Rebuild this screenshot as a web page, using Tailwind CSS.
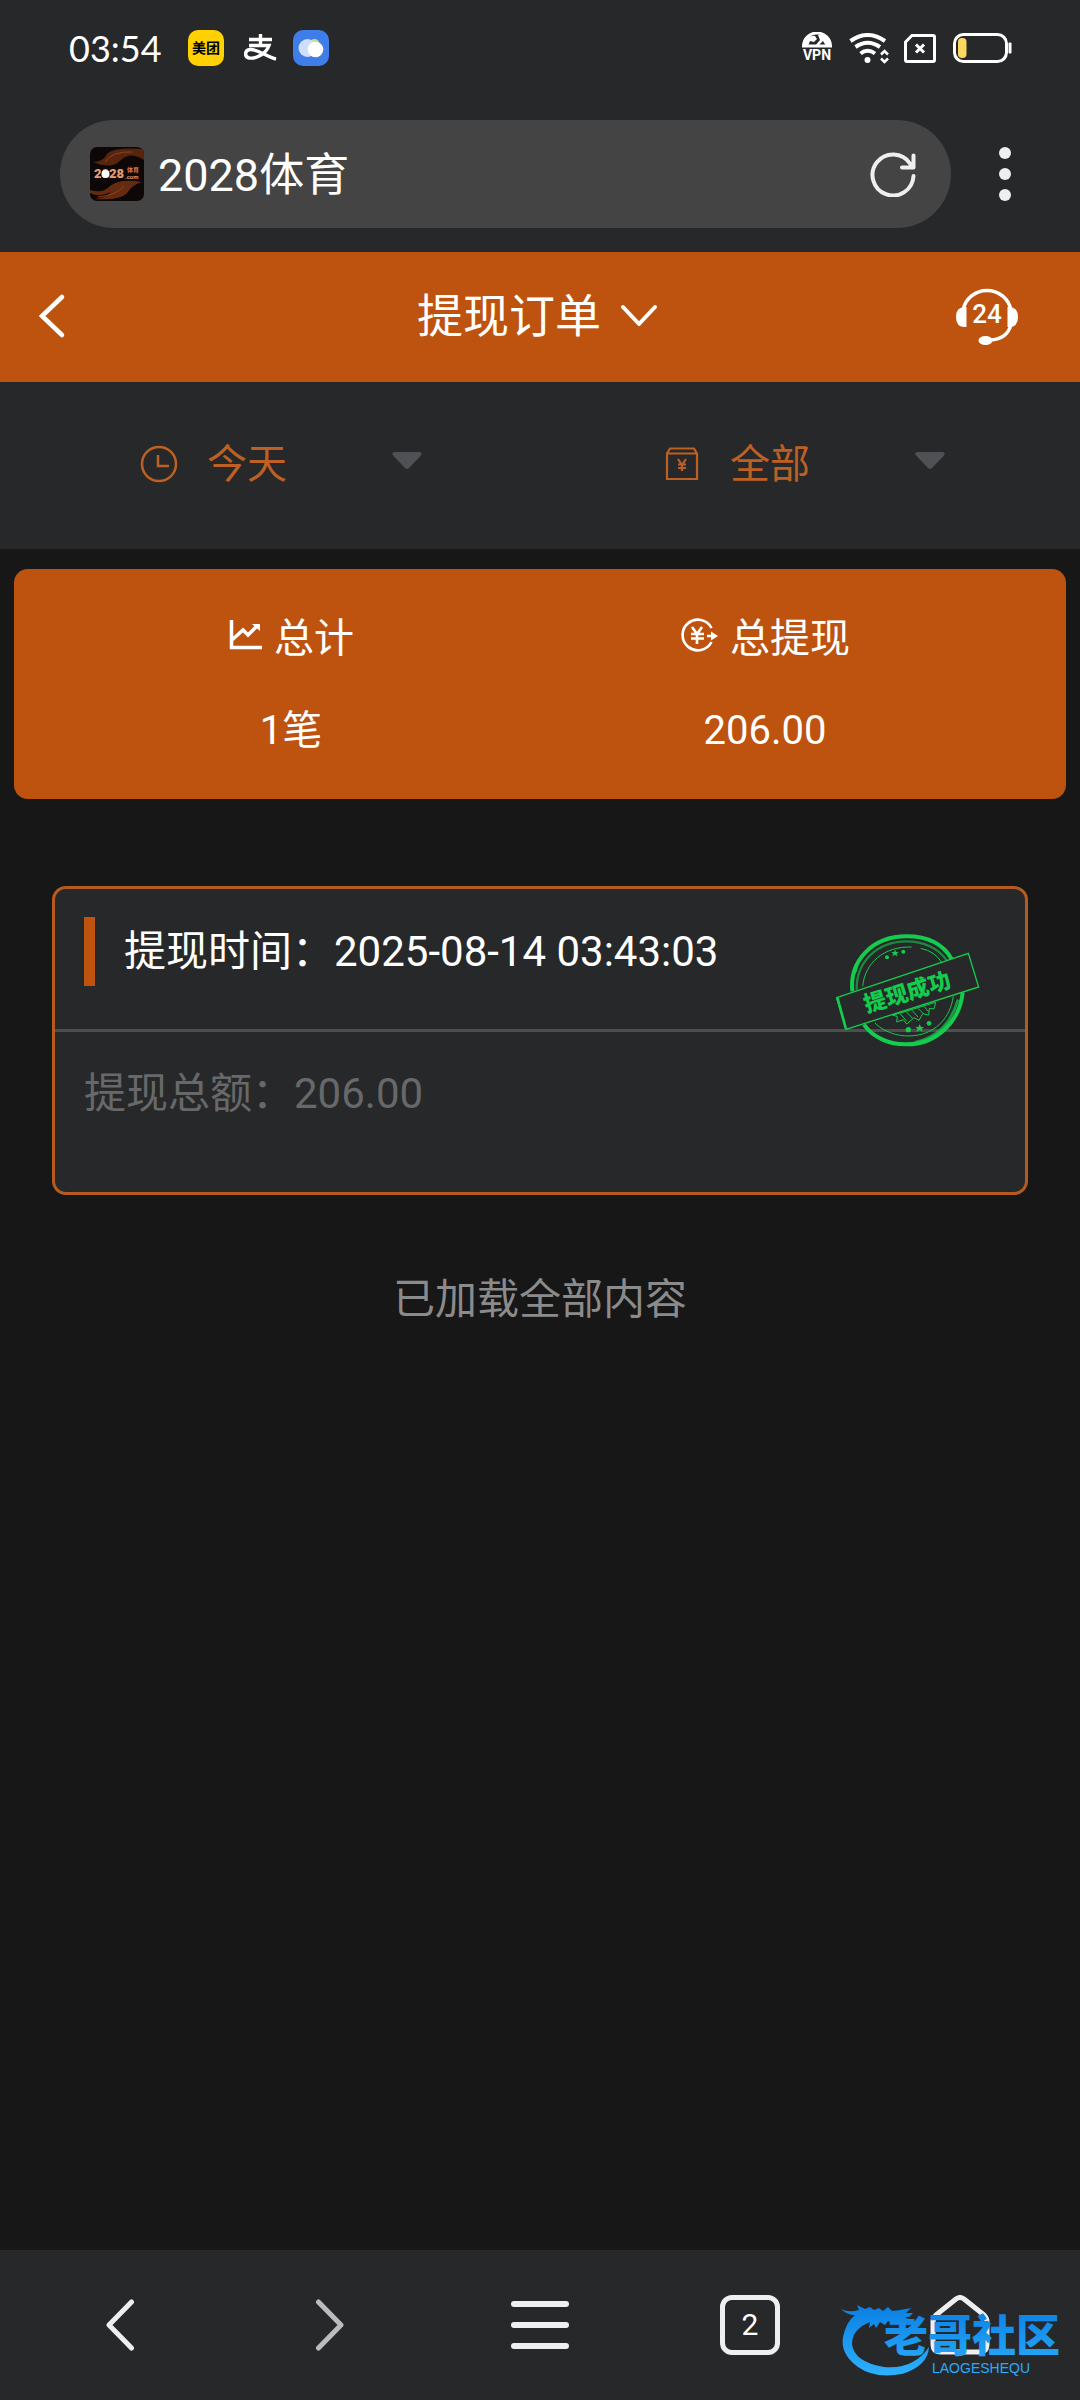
<!DOCTYPE html>
<html lang="zh-CN">
<head>
<meta charset="utf-8">
<meta name="viewport" content="width=device-width, initial-scale=1">
<title>提现订单</title>
<script src="https://cdn.jsdelivr.net/npm/@tailwindcss/browser@4"></script>
</head>
<body class="flex min-h-screen flex-col bg-[#171717] font-['Roboto','Noto_Sans_CJK_SC',sans-serif] text-white">

<!-- Phone status bar -->
<div class="flex h-24 items-center justify-between bg-[#27282a] pr-[68px] pl-[69px]">
  <div class="flex items-center">
    <time class="w-[119px] font-['Lato',sans-serif] text-[36px] leading-[48px]">03:54</time>
    <span class="flex size-9 items-center justify-center rounded-[10px] bg-[#ffd100] text-[14px] leading-none font-bold text-black">美团</span>
    <svg class="ml-5 h-7 w-[34px]" viewBox="0 0 34 28" fill="none" stroke="#fff" stroke-width="3.4" aria-label="支付宝"><path d="M5 5.500H28M16.500 0V11M5 11.500H25C22 20 12 25 5.500 24C0 23 0.500 16 6 15.500C14 15 23 23 32 25"/></svg>
    <svg class="ml-[15px] size-9" viewBox="0 0 36 36" aria-hidden="true"><rect width="36" height="36" rx="10" fill="#3f7de8"/><circle cx="21.500" cy="14" r="5" fill="#c9e46a"/><circle cx="14.500" cy="18" r="9" fill="#cfdffb"/><circle cx="22.500" cy="19.500" r="7.800" fill="#fff"/></svg>
  </div>
  <div class="flex items-center">
    <svg class="h-8 w-[30px]" viewBox="0 0 30 32" aria-label="VPN"><path d="M1.500 14A13.500 13 0 0 1 28.500 14Z" fill="none" stroke="#fff" stroke-width="3"/><path d="M1 13C4 6 9 3 13 4L15 7L12 10L8 9L6 14ZM16 3L22 3L27 9L28 14H24L21 9L16 14H13L18 8Z" fill="#fff"/><text x="15" y="28" text-anchor="middle" font-family="Roboto, sans-serif" font-weight="700" font-size="14" fill="#fff">VPN</text></svg>
    <svg class="ml-[17px] h-[31px] w-10" viewBox="0 0 40 31" fill="none" stroke="#fff" stroke-width="4" aria-label="Wi-Fi"><path d="M1.500 8Q18.500 -4 36 8M6.500 14Q18.500 5.500 31 14M11.500 20.500Q18.500 15 26 20.500"/><circle cx="18.500" cy="27" r="3" fill="#fff" stroke="none"/><path d="M32 21.500L35.500 18L39 21.500M32 25.500L35.500 29L39 25.500" stroke-width="2.500"/></svg>
    <svg class="ml-[15px] h-[29px] w-8" viewBox="0 0 32 29" fill="none" stroke="#fff" stroke-width="3" aria-label="无SIM卡"><path d="M8 1.500H29Q30.500 1.500 30.500 3V26Q30.500 27.500 29 27.500H3Q1.500 27.500 1.500 26V8Z"/><path d="M12 10.500L20 18.500M20 10.500L12 18.500"/></svg>
    <svg class="ml-[17px] h-[30px] w-[59px]" viewBox="0 0 59 30" aria-label="电量低"><rect x="1.500" y="1.500" width="52" height="27" rx="9" fill="none" stroke="#fff" stroke-width="3"/><rect x="5" y="5" width="8.500" height="20" rx="4" fill="#fbd862"/><rect x="55.500" y="9.500" width="3" height="11" rx="1" fill="#fff"/></svg>
  </div>
</div>

<!-- Browser address bar -->
<div class="flex h-[156px] items-start bg-[#27282a] pt-6 pr-[69px] pl-[60px]">
  <div class="flex h-[108px] flex-1 items-center rounded-full bg-[#444] pr-[35px] pl-[30px]">
    <svg class="size-[54px] shrink-0" viewBox="0 0 54 54" aria-hidden="true">
      <defs><clipPath id="fav"><rect width="54" height="54" rx="7"/></clipPath></defs>
      <g clip-path="url(#fav)"><rect width="54" height="54" fill="#0d0807"/><path d="M3 15Q13 15 17 7Q23 0 54 2V13Q40 4 31 13Q22 23 3 15Z" fill="#57250f"/><path d="M0 43Q13 47 20 39Q30 31 52 35Q42 38 38 45Q31 54 4 52Q16 51 21 45Q10 51 0 46Z" fill="#642b10"/><path d="M15 15Q22 4 42 5M8 50Q27 48 34 39" stroke="#8f4218" fill="none"/></g>
      <text x="4" y="31" font-family="Roboto, sans-serif" font-weight="900" font-size="13" fill="#e59a74">2028</text><circle cx="15.500" cy="27" r="4" fill="#fff"/>
      <text x="37" y="25" font-family="'Noto Sans CJK SC', sans-serif" font-weight="700" font-size="6" fill="#e07a45">体育</text><text x="35" y="31.500" font-family="Roboto, sans-serif" font-weight="700" font-size="6" fill="#e59a74">.com</text>
    </svg>
    <input aria-label="网址" value="2028体育" class="mt-[3px] ml-[14px] h-[66px] min-w-0 flex-1 bg-transparent text-[45px] leading-[66px] text-white outline-none">
    <button aria-label="刷新"><svg class="size-[46px]" viewBox="0 0 46 46" fill="none" stroke="#efeff0" stroke-width="4" stroke-linecap="round" stroke-linejoin="round"><path d="M43.500 25A20.500 20.500 0 1 1 40 12.500L43 16.500M43.500 4.500V16.500H32"/></svg></button>
  </div>
  <button aria-label="更多" class="mt-[27px] ml-12"><svg class="h-[54px] w-3" viewBox="0 0 12 54" fill="#efeff3"><circle cx="6" cy="6" r="6"/><circle cx="6" cy="27" r="6"/><circle cx="6" cy="48" r="6"/></svg></button>
</div>

<!-- Page header -->
<header class="grid h-[130px] grid-cols-[1fr_auto_1fr] items-center bg-[#be530f] pr-[62px] pb-[3px] pl-[38px]">
  <a href="#" aria-label="返回" class="w-8"><svg class="h-12 w-8" viewBox="0 0 32 48" fill="none" stroke="#fff" stroke-width="4.500" stroke-linecap="round"><path d="M24 5L4 24L24 43"/></svg></a>
  <button class="ml-[18px] flex items-center gap-5 text-[46px] leading-[60px]">提现订单<svg class="h-6 w-9" viewBox="0 0 36 24" fill="none" stroke="#fff" stroke-width="4" stroke-linecap="round" stroke-linejoin="round"><path d="M2 3L18 20L34 3"/></svg></button>
  <a href="#" aria-label="24小时客服" class="justify-self-end"><svg class="h-[60px] w-[62px]" viewBox="0 0 62 60" fill="none" stroke="#fff" stroke-width="3.500"><path d="M7 24A24.500 24.500 0 0 1 55 24M55 38Q52 53 34 54"/><path d="M10.500 21V41Q0 42 0 31Q0 20 10.500 21ZM51.500 21V41Q62 42 62 31Q62 20 51.500 21Z" fill="#fff" stroke="none"/><ellipse cx="29.500" cy="54.500" rx="7" ry="4.500" fill="#fff" stroke="none"/><text x="31" y="36.500" text-anchor="middle" font-family="Roboto, sans-serif" font-weight="500" font-size="26" fill="#fff" stroke="none">24</text></svg></a>
</header>

<!-- Filters -->
<form class="grid h-[167px] grid-cols-2 items-center bg-[#27282a] px-[17px] pb-[2px] text-[#be5f23]">
  <label class="flex items-center pl-[122px]">
    <svg class="size-10" viewBox="0 0 40 40" fill="none" stroke="currentColor" stroke-width="2.500"><circle cx="20" cy="19" r="17"/><path d="M19 10V21H30"/></svg>
    <select aria-label="时间" class="ml-7 w-[185px] appearance-none bg-transparent text-[40px] leading-[58px] outline-none"><option>今天</option></select>
    <svg class="-mt-2 h-[18px] w-[30px]" viewBox="0 0 30 18" fill="#505154"><path d="M2 0H28Q31 1 28.500 4L17 16Q15 18 13 16L1.500 4Q-1 1 2 0Z"/></svg>
  </label>
  <label class="flex items-center pl-[122px]">
    <svg class="size-10" viewBox="0 0 40 40" fill="none" stroke="currentColor" stroke-width="2.200"><path d="M5 8.500L8 3.500H32L35 8.500V34H5ZM5 8.500H35M16 14L20 20L24 14M20 20V26M16 19.500H24M16 23H24"/></svg>
    <select aria-label="类型" class="ml-7 w-[185px] appearance-none bg-transparent text-[40px] leading-[58px] outline-none"><option>全部</option></select>
    <svg class="-mt-2 h-[18px] w-[30px]" viewBox="0 0 30 18" fill="#505154"><path d="M2 0H28Q31 1 28.500 4L17 16Q15 18 13 16L1.500 4Q-1 1 2 0Z"/></svg>
  </label>
</form>

<main class="pt-5">
  <!-- Totals -->
  <section class="mx-[14px] grid grid-cols-2 rounded-[14px] bg-[#be530f] pt-10 pr-16 pb-[38px] pl-10 text-center text-[40px] leading-[60px]">
    <div class="flex flex-col gap-8">
      <h2 class="flex items-center justify-center gap-3"><svg class="-mt-2 h-[30px] w-[34px]" viewBox="0 0 34 30" fill="none" stroke="#fff" stroke-width="3.500"><path d="M3.500 0V27.500H34M4 20L15 10L20 15L30 5"/><path d="M24 4H32V11Z" fill="#fff" stroke="none"/></svg>总计</h2>
      <p>1笔</p>
    </div>
    <div class="flex flex-col gap-8">
      <h2 class="flex items-center justify-center gap-3"><svg class="-mt-2 h-[34px] w-[38px]" viewBox="0 0 38 34" fill="none" stroke="#fff" stroke-width="2.600"><path d="M31.500 10A15.300 15.300 0 1 0 31.500 24M12 9L17 16L22 9M17 16V26M11 16H24M11 20.500H24M27 18H34"/><path d="M31 13.500L38 18L31 22.500Z" fill="#fff" stroke="none"/></svg>总提现</h2>
      <p>206.00</p>
    </div>
  </section>

  <!-- Order -->
  <article class="relative mx-[52px] mt-[87px] rounded-[14px] border-3 border-[#b55a20] bg-[#27282a] text-[42px] leading-[60px]">
    <div class="flex items-center border-b-3 border-[#4e4e4f] px-[29px] pt-7 pb-[43px]">
      <span class="h-[69px] w-[11px] bg-[#be530f]"></span>
      <p class="ml-[29px]">提现时间：2025-08-14 03:43:03</p>
    </div>
    <p class="px-[29px] pt-8 pb-[68px] text-[#676869]">提现总额：206.00</p>
    <svg class="absolute top-11 right-11 h-[115px] w-[146px]" viewBox="105 100 438 345" fill="none" stroke="#14cc4d" aria-label="提现成功">
      <path d="M157 275C148 185 215 110 320 110C385 110 430 135 455 178" stroke-width="12"/>
      <path d="M170 270C168 190 228 125 320 125C370 125 415 145 440 182" stroke-width="7" opacity=".6"/>
      <path d="M188 260C195 190 250 140 335 142M362 146Q405 155 425 188" stroke-width="3"/>
      <path d="M162 198L176 192L170 216L158 232Z" fill="#14cc4d" stroke="none"/>
      <path d="M192 375C220 415 270 435 320 434C410 434 480 365 488 278" stroke-width="12"/>
      <path d="M345 428Q445 405 474 300" stroke-width="8" opacity=".7"/>
      <path d="M225 370C290 435 440 425 460 290" stroke-width="3"/>
      <path d="M110 294L505 161L536 262L138 389Z" stroke-width="4"/>
      <path d="M112 294L138 388" stroke-width="8"/>
      <path d="M278 347L407 308L402 328L388 326L386 346L368 342L357 362L342 354L320 373L310 360L290 367L292 350Z" stroke-width="3"/>
      <path d="M300 342L320 364M318 336L338 356M336 332L354 352M354 326L370 342M372 320L386 336" stroke-width="3"/>
      <g fill="#14cc4d" stroke="none"><circle cx="261" cy="173" r="6"/><path d="M285 150L288 157L296 157L290 162L293 170L285 165L277 170L280 162L274 157L282 157Z"/><circle cx="310" cy="156" r="6"/><circle cx="325" cy="390" r="8"/><path d="M359 374L363 382L372 382L365 388L368 397L359 391L350 397L353 388L346 382L355 382Z"/><circle cx="387" cy="371" r="7"/></g>
      <text x="322" y="301" text-anchor="middle" transform="rotate(-17 322 278)" font-family="'Liberation Serif', 'Noto Sans CJK SC', serif" font-weight="900" font-size="67" fill="#14cc4d" stroke="none">提现成功</text>
    </svg>
  </article>

  <p class="mt-[75px] text-center text-[42px] leading-[60px] text-[#8b8b8b]">已加载全部内容</p>
</main>

<!-- Browser toolbar -->
<nav class="relative mt-auto grid h-[150px] grid-cols-5 items-center justify-items-center bg-[#27282a] px-[15px]">
  <button aria-label="后退"><svg class="h-[54px] w-[30px]" viewBox="0 0 30 54" fill="none" stroke="#efeff0" stroke-width="5" stroke-linecap="round" stroke-linejoin="round"><path d="M26.500 4L4 27L26.500 50"/></svg></button>
  <button aria-label="前进"><svg class="h-[54px] w-[30px]" viewBox="0 0 30 54" fill="none" stroke="#bcbcbd" stroke-width="5" stroke-linecap="round" stroke-linejoin="round"><path d="M3.500 4L26 27L3.500 50"/></svg></button>
  <button aria-label="菜单"><svg class="h-12 w-[60px]" viewBox="0 0 60 48" stroke="#efeff0" stroke-width="6" stroke-linecap="round"><path d="M4 3H56M4 24H56M4 45H56"/></svg></button>
  <button aria-label="标签页" class="flex size-[60px] items-center justify-center rounded-xl border-[5px] border-[#efeff0] text-[30px] leading-none">2</button>
  <button aria-label="主页"><svg class="size-[60px]" viewBox="0 0 60 60" fill="none" stroke="#efeff0" stroke-width="5" stroke-linejoin="round"><path d="M26 4Q30 1 34 4L54 20Q57 23 57 27V49Q57 57 49 57H11Q3 57 3 49V27Q3 23 6 20Z"/></svg></button>

  <!-- Community badge floating over the toolbar -->
  <svg class="pointer-events-none absolute right-[14px] bottom-5 h-20 w-[226px]" viewBox="0 0 226 80" aria-label="老哥社区">
    <defs><linearGradient id="sea" x1="0" y1="0" x2="0" y2="80" gradientUnits="userSpaceOnUse"><stop offset="0" stop-color="#087be0"/><stop offset="1" stop-color="#2fb4ff"/></linearGradient></defs>
    <g fill="url(#sea)">
      <path d="M1 9Q9 13 19 10L17 5L25 9L30 7L34 10L39 8L43 11L48 7L52 11L60 10L71 8L66 13L73 13L69 17L60 17L70 19L69 23L61 21L55 24L48 21L45 25L40 22L36 28L34 24L29 28L30 22Q12 29 12 44Q14 62 44 67Q73 70 89 47Q88 66 62 74Q35 79 18 67Q0 54 3 37Q6 22 15 15Q7 15 1 9Z"/>
      <text x="44" y="52" font-family="'Noto Sans CJK SC', sans-serif" font-weight="900" font-size="44">老哥社区</text>
      <text x="92" y="73" font-family="'Liberation Sans', sans-serif" font-size="14">LAOGESHEQU</text>
    </g>
  </svg>
</nav>
</body>
</html>
